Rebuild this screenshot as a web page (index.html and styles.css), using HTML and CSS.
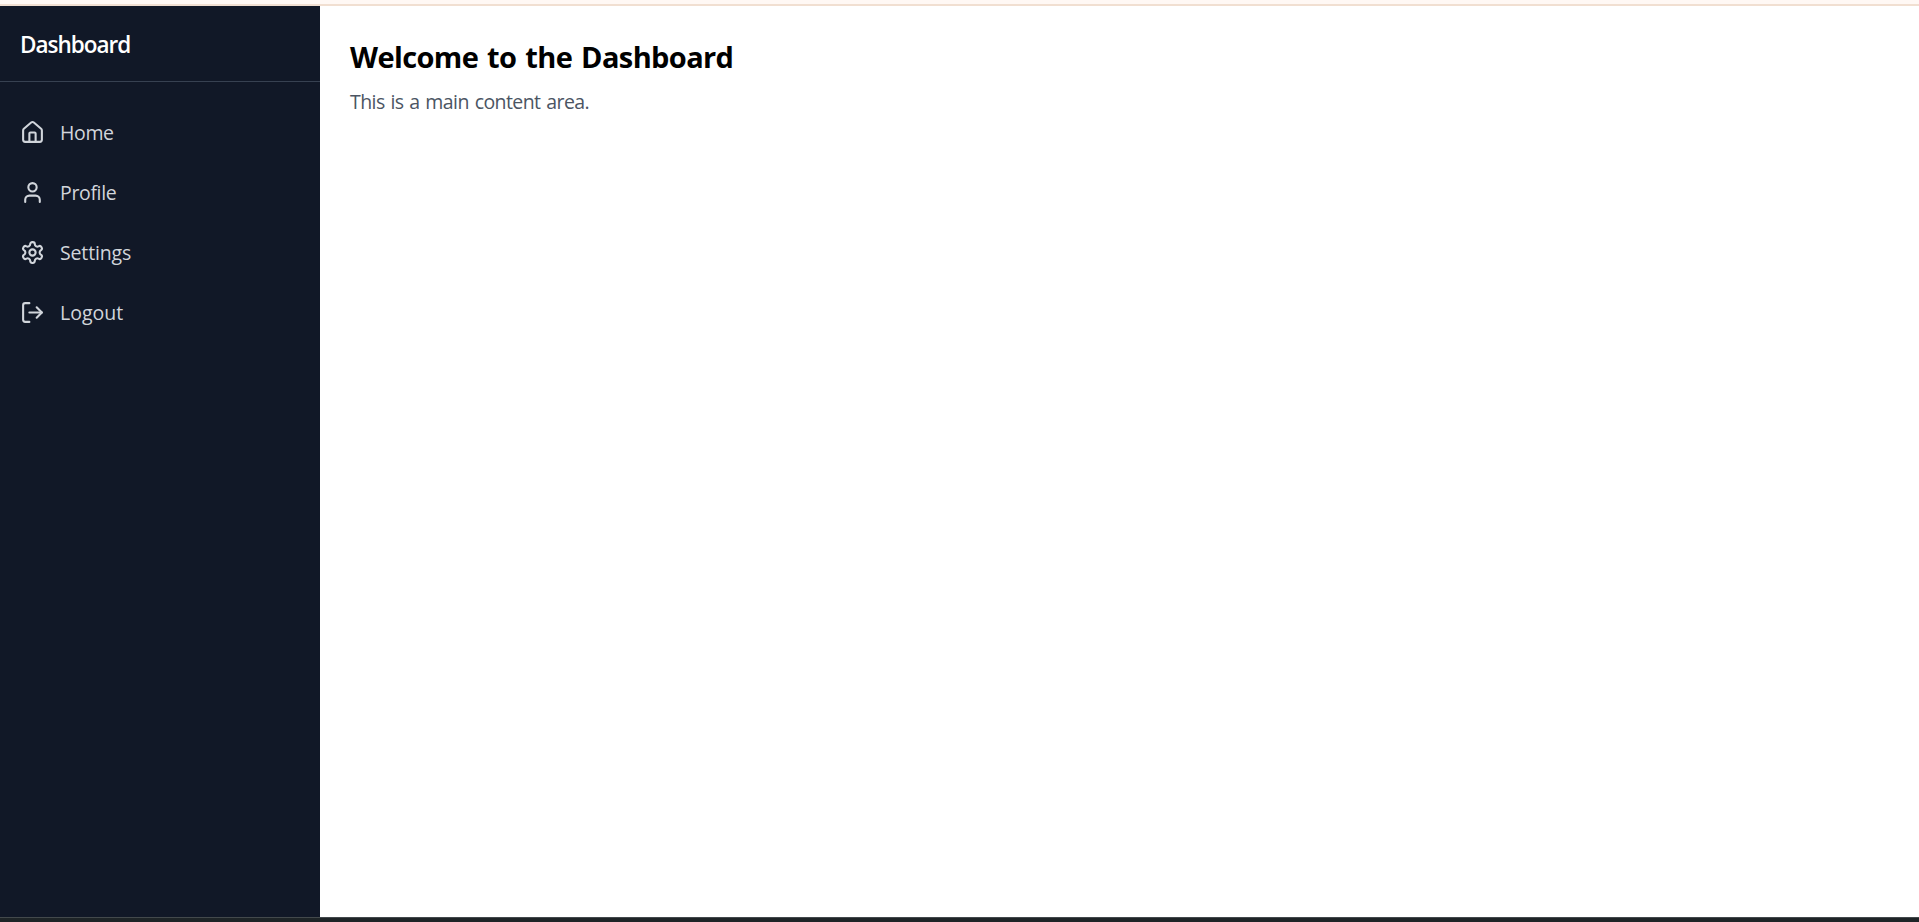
FILE: index.html
```
<!DOCTYPE html>
<html lang="en">
<head>
<meta charset="utf-8">
<title>Dashboard</title>
<link rel="stylesheet" href="styles.css">
</head>
<body>
<div class="top-strip"></div>
<div class="layout">
  <aside class="sidebar">
    <div class="brand"><span class="brand-name">Dashboard</span></div>
    <nav class="menu">
      <a class="item"><svg class="icon" viewBox="0 0 24 24"><path d="M15 21v-8a1 1 0 0 0-1-1h-4a1 1 0 0 0-1 1v8"/><path d="M3 10a2 2 0 0 1 .709-1.528l7-5.999a2 2 0 0 1 2.582 0l7 5.999A2 2 0 0 1 21 10v9a2 2 0 0 1-2 2H5a2 2 0 0 1-2-2z"/></svg><span class="label">Home</span></a>
      <a class="item"><svg class="icon" viewBox="0 0 24 24"><path d="M19 21v-2a4 4 0 0 0-4-4H9a4 4 0 0 0-4 4v2"/><circle cx="12" cy="7" r="4"/></svg><span class="label">Profile</span></a>
      <a class="item"><svg class="icon" viewBox="0 0 24 24"><path d="M12.22 2h-.44a2 2 0 0 0-2 2v.18a2 2 0 0 1-1 1.73l-.43.25a2 2 0 0 1-2 0l-.15-.08a2 2 0 0 0-2.73.73l-.22.38a2 2 0 0 0 .73 2.73l.15.1a2 2 0 0 1 1 1.72v.51a2 2 0 0 1-1 1.74l-.15.09a2 2 0 0 0-.73 2.73l.22.38a2 2 0 0 0 2.73.73l.15-.08a2 2 0 0 1 2 0l.43.25a2 2 0 0 1 1 1.73V20a2 2 0 0 0 2 2h.44a2 2 0 0 0 2-2v-.18a2 2 0 0 1 1-1.73l.43-.25a2 2 0 0 1 2 0l.15.08a2 2 0 0 0 2.73-.73l.22-.39a2 2 0 0 0-.73-2.73l-.15-.08a2 2 0 0 1-1-1.74v-.5a2 2 0 0 1 1-1.74l.15-.09a2 2 0 0 0 .73-2.73l-.22-.38a2 2 0 0 0-2.73-.73l-.15.08a2 2 0 0 1-2 0l-.43-.25a2 2 0 0 1-1-1.73V4a2 2 0 0 0-2-2z"/><circle cx="12" cy="12" r="3"/></svg><span class="label settings">Settings</span></a>
      <a class="item"><svg class="icon" viewBox="0 0 24 24"><path d="m16 17 5-5-5-5"/><path d="M21 12H9"/><path d="M9 21H5a2 2 0 0 1-2-2V5a2 2 0 0 1 2-2h4"/></svg><span class="label logout">Logout</span></a>
    </nav>
  </aside>
  <main class="content">
    <h1 class="title">Welcome to the Dashboard</h1>
    <p class="text">This is a main content area.</p>
  </main>
</div>
<div class="bottom-strip"></div>
</body>
</html>
```
FILE: styles.css
```
* { box-sizing: border-box; }
body {
  margin: 0;
  height: 922px;
  display: flex;
  flex-direction: column;
  overflow: hidden;
  background: #fff;
  font-family: "Open Sans", "Noto Sans", sans-serif;
  font-size: 20px;
}
.top-strip { height: 6px; flex: none; background: #fff8f4; border-bottom: 2px solid #f1dfd1; }
.bottom-strip { height: 5px; flex: none; background: #1e2427; border-top: 1px solid #43494c; }
.layout { flex: 1; display: flex; min-height: 0; }
.sidebar { width: 320px; flex: none; background: #111827; color: #d1d5db; }
.brand { height: 76px; padding: 21px 20px 19px; border-bottom: 1px solid #374151; color: #fff; font-size: 22.5px; line-height: 35px; font-weight: 600; }
.brand-name { letter-spacing: -1px; }
.menu { padding: 25px 10px; display: flex; flex-direction: column; gap: 10px; }
.item { height: 50px; padding: 0 10px; display: flex; align-items: center; gap: 15px; }
.icon { width: 25px; height: 25px; flex: none; fill: none; stroke: currentColor; stroke-width: 2; stroke-linecap: round; stroke-linejoin: round; }
.label { padding-top: 2px; line-height: 30px; font-size: 19.5px; letter-spacing: -0.35px; }
.settings { letter-spacing: -0.15px; }
.logout { letter-spacing: 0; }
.content { flex: 1; padding: 30px; }
.title { margin: 0 0 9px; font-size: 29px; line-height: 42px; font-weight: 700; color: #000; letter-spacing: -0.62px; word-spacing: 2px; }
.text { margin: 0; line-height: 30px; font-size: 19.5px; color: #4b5563; letter-spacing: -0.57px; word-spacing: 1.3px; }
```
